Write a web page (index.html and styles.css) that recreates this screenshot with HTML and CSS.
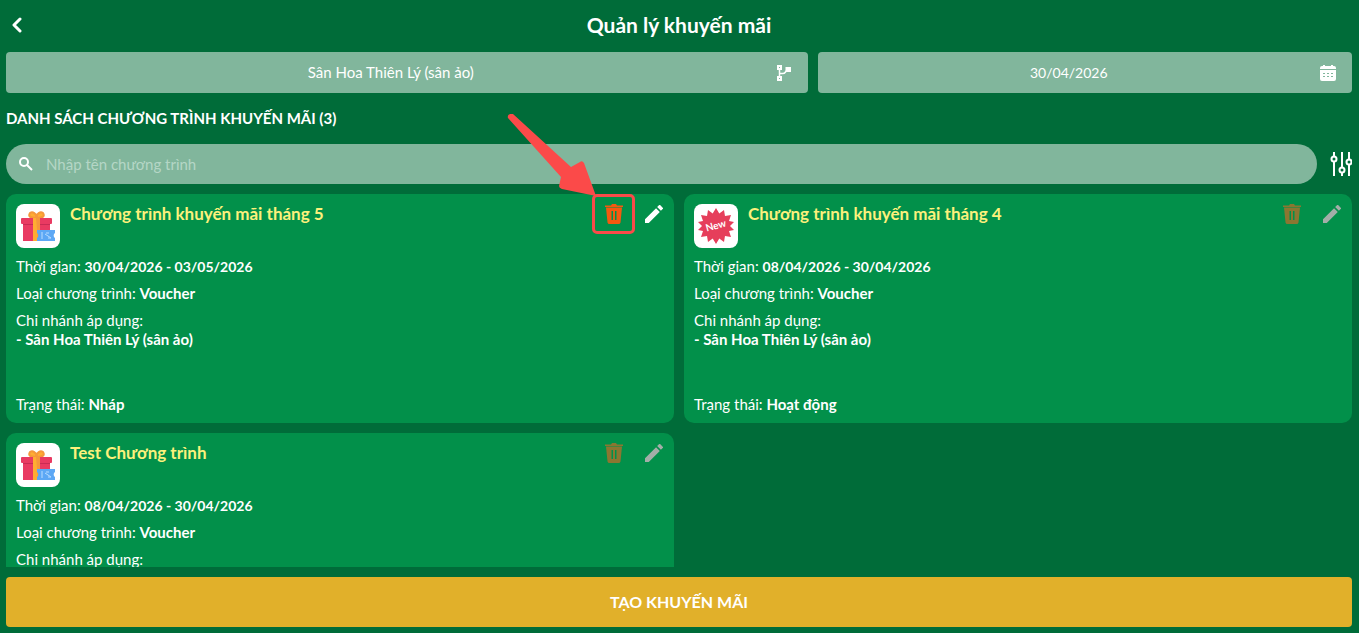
FILE: index.html
```html
<!DOCTYPE html>
<html lang="vi">
<head>
    <meta charset="UTF-8">
    <meta name="viewport" content="width=device-width, initial-scale=1.0">
    <title>Quản lý khuyến mãi</title>
    <link rel="stylesheet" href="styles.css">
</head>
<body>
    <svg class="sprite" aria-hidden="true">
        <symbol id="icon-trash" viewBox="0 0 20 22">
            <path fill-rule="evenodd" d="M1 2.500h6L8 1h4l1 1.500h6V4H1zM2 4.500h16l-1.500 15a2 2 0 0 1-2 1.500h-9a2 2 0 0 1-2-1.500zM7.500 8v9h1.500V8zM11 8v9h1.500V8z"/>
        </symbol>
        <symbol id="icon-pencil" viewBox="3 3 18 18">
            <path d="M3 17.250V21h3.750L17.810 9.940l-3.750-3.750zM20.710 7.040a1 1 0 0 0 0-1.410l-2.340-2.340a1 1 0 0 0-1.410 0l-1.830 1.830 3.750 3.750z"/>
        </symbol>
        <symbol id="icon-gift" viewBox="0 0 44 44">
            <path d="M20 14c-6 0-8-2-6-5 3-2 6 1 7 4zM21 14c6 0 8-2 6-5-3-2-6 1-7 4z" fill="#ffad32" stroke="#f5983b" stroke-width="2"/>
            <rect x="7" y="19" width="27" height="18" fill="#e93a62"/>
            <rect x="5" y="14" width="31" height="6" rx="1" fill="#e93a62"/>
            <rect x="7" y="20" width="27" height="1" fill="#c92b54"/>
            <rect x="17" y="14" width="7" height="23" fill="#ffad32"/>
            <path d="M20 14h4v23h-2z" fill="#f5983b"/>
            <path d="M21 26h18v3a3 3 0 0 0 0 5v3H21v-3a3 3 0 0 0 0-5z" fill="#5da8f5"/>
            <path d="M26 28v7M29 30l6 4M30 29h3M32 34h3" stroke="#b9dcff" stroke-width="1" fill="none"/>
        </symbol>
    </svg>

    <div class="page">
        <header class="header">
            <button class="back" aria-label="Quay lại">
                <svg width="12" height="18" viewBox="0 0 12 18"><path d="M10 3L4 9l6 6" fill="none" stroke="#fff" stroke-width="3" stroke-linecap="round" stroke-linejoin="round"/></svg>
            </button>
            <h1>Quản lý khuyến mãi</h1>
        </header>

        <div class="selectors">
            <button class="selector">
                <span>Sân Hoa Thiên Lý (sân ảo)</span>
                <svg width="16" height="16" viewBox="0 0 16 16"><path d="M3.500 5v6M3.500 8.500h3q2 0 3-1.500l1.500-2" fill="none" stroke="#fff" stroke-width="1.500"/><path fill="#fff" fill-rule="evenodd" d="M1 0h5v5H1zM1 11h5v5H1zM9.500 2H15v5H9.500zM3 2v1h1V2zM3 13v1h1v-1z"/></svg>
            </button>
            <button class="selector">
                <span class="num">30/04/2026</span>
                <svg width="16" height="18" viewBox="0 0 16 18"><path fill="#fff" fill-rule="evenodd" d="M3 1h2v1h6V1h2v1h1a2 2 0 0 1 2 2v1H0V4a2 2 0 0 1 2-2h1zM0 6h16v9a2 2 0 0 1-2 2H2a2 2 0 0 1-2-2zM3 9v1h2V9zM7 9v1h2V9zM11 9v1h2V9zM3 12v1h2v-1zM7 12v1h2v-1zM11 12v1h2v-1z"/></svg>
            </button>
        </div>

        <h2>DANH SÁCH CHƯƠNG TRÌNH KHUYẾN MÃI (3)</h2>

        <div class="search-row">
            <label class="search">
                <svg width="16" height="16" viewBox="0 0 16 16" fill="none" stroke="#fff" stroke-width="2"><circle cx="6" cy="6" r="4"/><path d="M9 9l5 5"/></svg>
                <input type="text" placeholder="Nhập tên chương trình" aria-label="Nhập tên chương trình">
            </label>
            <button class="filter" aria-label="Bộ lọc">
                <svg width="22" height="24" viewBox="0 0 22 24" fill="none" stroke="#fff" stroke-width="2"><path d="M4 0v4M4 10v14M12 0v15M12 21v3M19 0v7M19 13v11"/><circle cx="4" cy="7" r="2.500"/><circle cx="12" cy="18" r="2.500"/><circle cx="19" cy="10" r="2.500"/></svg>
            </button>
        </div>

        <div class="list-wrap">
            <main class="list">
                <article class="card">
                    <div class="card-head">
                        <svg class="thumb"><use href="#icon-gift"/></svg>
                        <h3>Chương trình khuyến mãi tháng 5</h3>
                        <button class="action delete" aria-label="Xóa"><svg width="20" height="22"><use href="#icon-trash"/></svg></button>
                        <button class="action edit" aria-label="Sửa"><svg width="18" height="18"><use href="#icon-pencil"/></svg></button>
                    </div>
                    <p>Thời gian: <b class="num">30/04/2026 - 03/05/2026</b></p>
                    <p>Loại chương trình: <b>Voucher</b></p>
                    <p>Chi nhánh áp dụng:<br><b>- Sân Hoa Thiên Lý (sân ảo)</b></p>
                    <p class="status">Trạng thái: <b>Nháp</b></p>
                </article>

                <article class="card">
                    <div class="card-head">
                        <svg class="thumb" viewBox="0 0 44 44">
                            <path fill="#e63e5b" d="M22 4l3.300 5.500L30 6l1 6 6-1-2 6 5 1-4 4 4 4-5 1 2 6-6-1-1 6-4.700-3.500L22 40l-3.300-5.500L14 38l-1-6-6 1 2-6-5-1 4-4-4-4 5-1-2-6 6 1 1-6 4.700 3.500z"/>
                            <text x="22" y="25" transform="rotate(-15 22 22)" text-anchor="middle" class="new-text">New</text>
                        </svg>
                        <h3>Chương trình khuyến mãi tháng 4</h3>
                        <button class="action delete" aria-label="Xóa" disabled><svg width="20" height="22"><use href="#icon-trash"/></svg></button>
                        <button class="action edit" aria-label="Sửa" disabled><svg width="18" height="18"><use href="#icon-pencil"/></svg></button>
                    </div>
                    <p>Thời gian: <b class="num">08/04/2026 - 30/04/2026</b></p>
                    <p>Loại chương trình: <b>Voucher</b></p>
                    <p>Chi nhánh áp dụng:<br><b>- Sân Hoa Thiên Lý (sân ảo)</b></p>
                    <p class="status">Trạng thái: <b>Hoạt động</b></p>
                </article>

                <article class="card">
                    <div class="card-head">
                        <svg class="thumb"><use href="#icon-gift"/></svg>
                        <h3>Test Chương trình</h3>
                        <button class="action delete" aria-label="Xóa" disabled><svg width="20" height="22"><use href="#icon-trash"/></svg></button>
                        <button class="action edit" aria-label="Sửa" disabled><svg width="18" height="18"><use href="#icon-pencil"/></svg></button>
                    </div>
                    <p>Thời gian: <b class="num">08/04/2026 - 30/04/2026</b></p>
                    <p>Loại chương trình: <b>Voucher</b></p>
                    <p>Chi nhánh áp dụng:</p>
                </article>
            </main>

            <!-- hướng dẫn: chỉ vào nút xóa -->
            <div class="highlight"></div>
            <svg class="arrow" width="90" height="84" viewBox="0 0 90 84"><path fill="#fb4a49" d="M3 1q-3 1-2 4L54 64l-2 9q0 2 3 3l34 7-12-33q-2-3-4-1l-9 5L6 1z"/></svg>
        </div>

        <button class="create">TẠO KHUYẾN MÃI</button>
    </div>
</body>
</html>
```

FILE: styles.css
```css
* {
    box-sizing: border-box;
}
body {
    margin: 0;
    background: #006c39;
    color: #fff;
    font-family: Lato, "Noto Sans", sans-serif;
    font-size: 15px;
    line-height: 19px;
}
button, input {
    font: inherit;
    color: inherit;
    border: none;
    background: none;
    padding: 0;
    margin: 0;
}
button {
    cursor: pointer;
}
h1, h2, h3, p {
    margin: 0;
}
svg {
    display: block;
    flex: none;
}
.sprite {
    position: absolute;
    width: 0;
    height: 0;
}
.num {
    font-size: 14px;
}
.new-text {
    font: bold 10px Lato, sans-serif;
    fill: #fff;
}
.page {
    display: flex;
    flex-direction: column;
    height: 100vh;
    padding: 0 7px 6px 6px;
}
.header {
    display: grid;
    grid-template-columns: 24px 1fr 24px;
    align-items: center;
    height: 52px;
    padding-bottom: 3px;
}
.back {
    padding: 0 4px;
}
h1 {
    font-size: 21px;
    line-height: 26px;
    text-align: center;
}
.selectors {
    display: grid;
    grid-template-columns: 3fr 2fr;
    gap: 10px;
}
.selector {
    display: flex;
    align-items: center;
    height: 41px;
    padding-right: 16px;
    border-radius: 4px;
    background: #81b69c;
}
.selector span {
    flex: 1;
}
h2 {
    padding: 16px 0;
    font-size: 15px;
    line-height: 19px;
}
.search-row {
    display: flex;
    align-items: center;
    gap: 13px;
}
.search {
    flex: 1;
    display: flex;
    align-items: center;
    gap: 12px;
    height: 40px;
    padding: 0 12px;
    border-radius: 20px;
    background: #81b69c;
}
.search input {
    flex: 1;
    min-width: 0;
    outline: none;
}
.search input::placeholder {
    color: #b5d6c6;
    opacity: 1;
}
.list-wrap {
    position: relative;
    flex: 1;
    min-height: 0;
    margin: 10px 0;
}
.list {
    display: grid;
    grid-template-columns: 1fr 1fr;
    grid-auto-rows: 229px;
    gap: 10px;
    height: 100%;
    overflow: hidden;
}
.card {
    display: flex;
    flex-direction: column;
    gap: 8px;
    padding: 10px 11px 9px 10px;
    border-radius: 10px;
    background: #02904a;
}
.card-head {
    display: flex;
    align-items: flex-start;
    margin-bottom: 1px;
}
.thumb {
    width: 44px;
    height: 44px;
    margin-right: 10px;
    border-radius: 8px;
    background: #fff;
}
h3 {
    flex: 1;
    color: #fcf17c;
    font-size: 17px;
    line-height: 20px;
}
.action {
    display: flex;
    align-items: center;
    height: 20px;
    margin-left: 21px;
}
.delete {
    fill: #f4590f;
}
.edit {
    fill: #fff;
}
.delete:disabled {
    fill: #8b7631;
}
.edit:disabled {
    fill: #a3aea8;
}
.status {
    margin-top: auto;
}
.highlight {
    position: absolute;
    top: 0;
    right: calc(50% + 44px);
    width: 43px;
    height: 40px;
    border: 3px solid #fb4a49;
    border-radius: 5px;
    pointer-events: none;
}
.arrow {
    position: absolute;
    top: -81px;
    right: calc(50% + 82px);
    pointer-events: none;
}
.create {
    height: 50px;
    padding-bottom: 2px;
    border-radius: 4px;
    background: #e1b02a;
    font-size: 16px;
    font-weight: bold;
}
```
